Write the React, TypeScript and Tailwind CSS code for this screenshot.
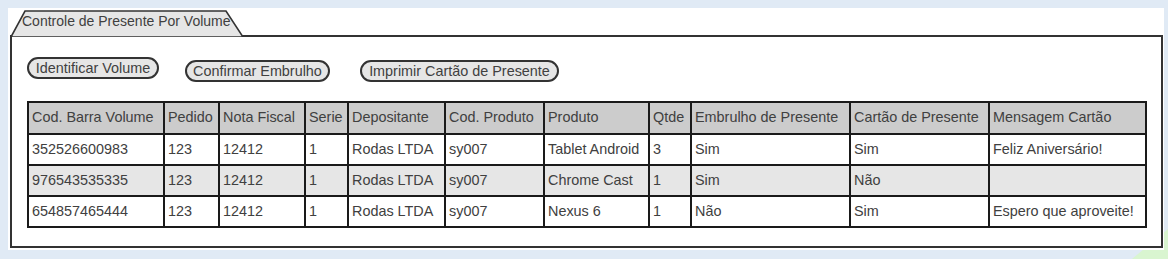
import React from 'react';

type Row = {
  barcode: string;
  pedido: string;
  nota: string;
  serie: string;
  depositante: string;
  codProduto: string;
  produto: string;
  qtde: string;
  embrulho: string;
  cartao: string;
  mensagem: string;
};

const columns = [
  { label: 'Cod. Barra Volume', width: 136 },
  { label: 'Pedido', width: 55 },
  { label: 'Nota Fiscal', width: 86 },
  { label: 'Serie', width: 43 },
  { label: 'Depositante', width: 97 },
  { label: 'Cod. Produto', width: 99 },
  { label: 'Produto', width: 105 },
  { label: 'Qtde', width: 42 },
  { label: 'Embrulho de Presente', width: 159 },
  { label: 'Cartão de Presente', width: 139 },
  { label: 'Mensagem Cartão', width: 157 },
];

const rows: Row[] = [
  {
    barcode: '352526600983', pedido: '123', nota: '12412', serie: '1', depositante: 'Rodas LTDA',
    codProduto: 'sy007', produto: 'Tablet Android', qtde: '3', embrulho: 'Sim', cartao: 'Sim',
    mensagem: 'Feliz Aniversário!',
  },
  {
    barcode: '976543535335', pedido: '123', nota: '12412', serie: '1', depositante: 'Rodas LTDA',
    codProduto: 'sy007', produto: 'Chrome Cast', qtde: '1', embrulho: 'Sim', cartao: 'Não',
    mensagem: '',
  },
  {
    barcode: '654857465444', pedido: '123', nota: '12412', serie: '1', depositante: 'Rodas LTDA',
    codProduto: 'sy007', produto: 'Nexus 6', qtde: '1', embrulho: 'Não', cartao: 'Sim',
    mensagem: 'Espero que aproveite!',
  },
];

const PillButton: React.FC<{ label: string; className?: string }> = ({ label, className = '' }) => (
  <button
    className={`flex h-[22px] items-center justify-center whitespace-nowrap rounded-full border-2 border-[#333] bg-[#e6e6e6] px-0 text-[14.4px] leading-none text-[#404040] ${className}`}
  >
    {label}
  </button>
);

const App: React.FC = () => {
  return (
    <div
      className="relative h-[259px] w-[1168px] overflow-hidden bg-[#e0eaf5] pl-[8px] pt-[8px]"
      style={{ fontFamily: '"Liberation Sans", Arial, sans-serif' }}
    >
      {/* green corner, behind the page */}
      <svg className="absolute bottom-0 right-0" width="36" height="30" viewBox="0 0 36 30">
        <polygon points="36,0 36,30 0,30" fill="#d9f5d0" />
      </svg>

      <div className="relative h-[242px] w-[1156px] bg-white pl-[2px] pt-[2px]">
        {/* Tab */}
        <div className="relative h-[27px] w-[236px]">
          <svg className="absolute inset-0" width="236" height="27" viewBox="0 0 236 27">
            <polygon points="1,27 15,1 216,1 233,27" fill="#e6e6e6" stroke="#333" strokeWidth="1.6" />
          </svg>
          <span className="absolute left-[12px] top-[3px] text-[14px] leading-[16px] text-[#404040]">
            Controle de Presente Por Volume
          </span>
        </div>

        {/* Panel */}
        <div className="-mt-[2px] h-[213px] w-[1153px] border-2 border-[#333] px-[15px] pt-[20px]">
          <div className="flex items-start">
            <PillButton label="Identificar Volume" className="w-[132px]" />
            <PillButton label="Confirmar Embrulho" className="ml-[26px] mt-[3px] w-[145px]" />
            <PillButton label="Imprimir Cartão de Presente" className="ml-[30px] mt-[3px] w-[199px]" />
          </div>

          <table className="mt-[19px] w-[1119px] table-fixed border-collapse text-[14.4px] text-[#404040]">
            <colgroup>
              {columns.map((c) => (
                <col key={c.label} style={{ width: c.width }} />
              ))}
            </colgroup>
            <thead>
              <tr className="h-[32px] bg-[#cccccc]">
                {columns.map((c) => (
                  <th
                    key={c.label}
                    className="whitespace-nowrap border-2 border-[#1a1a1a] px-[3px] text-left font-normal"
                  >
                    {c.label}
                  </th>
                ))}
              </tr>
            </thead>
            <tbody>
              {rows.map((r, i) => (
                <tr key={r.barcode} className={`h-[31px] ${i === 1 ? 'bg-[#e6e6e6]' : 'bg-white'}`}>
                  {[r.barcode, r.pedido, r.nota, r.serie, r.depositante, r.codProduto, r.produto, r.qtde, r.embrulho, r.cartao, r.mensagem].map(
                    (v, j) => (
                      <td key={j} className="whitespace-nowrap border-2 border-[#1a1a1a] px-[3px]">
                        {v}
                      </td>
                    ),
                  )}
                </tr>
              ))}
            </tbody>
          </table>
        </div>
      </div>
    </div>
  );
};

export default App;
